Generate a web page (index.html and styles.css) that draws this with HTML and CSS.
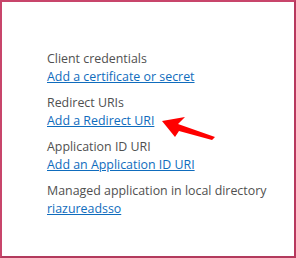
FILE: index.html
```html
<!DOCTYPE html>
<html lang="en">
<head>
    <meta charset="UTF-8">
    <title>App registration</title>
    <link rel="stylesheet" href="styles.css">
</head>
<body>
    <div class="panel">
        <div class="info-list">
            <div class="info-item">
                <span class="info-label">Client credentials</span>
                <a class="info-link" href="#">Add a certificate or secret</a>
            </div>
            <div class="info-item">
                <span class="info-label">Redirect URIs</span>
                <a class="info-link" href="#">Add a Redirect URI</a>
            </div>
            <div class="info-item">
                <span class="info-label">Application ID URI</span>
                <a class="info-link" href="#">Add an Application ID URI</a>
            </div>
            <div class="info-item">
                <span class="info-label">Managed application in local directory</span>
                <a class="info-link" href="#">riazureadsso</a>
            </div>
        </div>

        <!-- callout arrow pointing at the redirect link -->
        <svg class="callout-arrow" width="60" height="30" viewBox="160 115 60 30">
            <polygon points="162,121 185,117 178,124 215,137 212,140 179,131 175,137" fill="#ff0000"/>
        </svg>
    </div>
</body>
</html>
```

FILE: styles.css
```css
* { box-sizing: border-box; margin: 0; padding: 0; }

body {
    font-family: "Open Sans", "Noto Sans", sans-serif;
    background: #ffffff;
}

.panel {
    position: relative;
    width: 296px;
    height: 258px;
    border: 2px solid #c8456b;
    border-right-color: #b8385e;
    border-bottom-color: #b33a5d;
    padding: 48px 0 0 45px;
}

.info-list {
    display: flex;
    flex-direction: column;
    gap: 8px;
}

.info-item {
    display: flex;
    flex-direction: column;
    align-items: flex-start;
    font-size: 12.4px;
    line-height: 18px;
}

.info-label { color: #505050; }

.info-link {
    color: #0f6cbd;
    text-decoration: underline;
}

.callout-arrow {
    position: absolute;
    left: 158px;
    top: 113px;
}
```
